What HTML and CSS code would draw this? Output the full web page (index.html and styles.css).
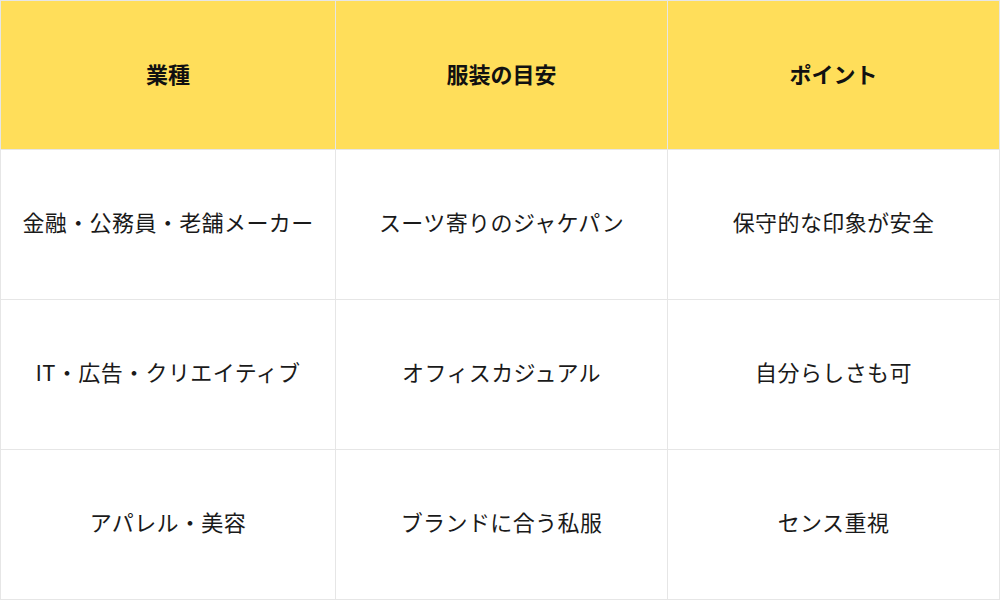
FILE: index.html
```html
<!DOCTYPE html>
<html lang="ja">
<head>
<meta charset="utf-8">
<link rel="stylesheet" href="styles.css">
</head>
<body>
<div class="table">
  <div class="cell head">業種</div>
  <div class="cell head">服装の目安</div>
  <div class="cell head">ポイント</div>
  <div class="cell">金融・公務員・老舗メーカー</div>
  <div class="cell">スーツ寄りのジャケパン</div>
  <div class="cell">保守的な印象が安全</div>
  <div class="cell">IT・広告・クリエイティブ</div>
  <div class="cell">オフィスカジュアル</div>
  <div class="cell">自分らしさも可</div>
  <div class="cell">アパレル・美容</div>
  <div class="cell">ブランドに合う私服</div>
  <div class="cell">センス重視</div>
</div>
</body>
</html>
```
FILE: styles.css
```css
html, body {
  margin: 0;
  padding: 0;
  background: #fff;
}
.table {
  width: 1000px;
  height: 600px;
  box-sizing: border-box;
  display: grid;
  grid-template-columns: 335px 332px 332px;
  grid-template-rows: 149px 150px 150px 150px;
  border-left: 1px solid #e6e6e6;
  border-top: 1px solid #e6e6e6;
  font-family: "Noto Sans CJK JP", "Noto Sans", sans-serif;
}
.cell {
  box-sizing: border-box;
  border-right: 1px solid #e6e6e6;
  border-bottom: 1px solid #e6e6e6;
  display: flex;
  align-items: center;
  justify-content: center;
  font-size: 22px;
  letter-spacing: 0.4px;
  line-height: 1;
  padding-bottom: 7px;
  color: #1a1a1a;
  white-space: nowrap;
}
.head {
  background: #ffde5a;
  font-weight: bold;
  color: #111;
  letter-spacing: 0;
  padding-bottom: 5px;
}
```
